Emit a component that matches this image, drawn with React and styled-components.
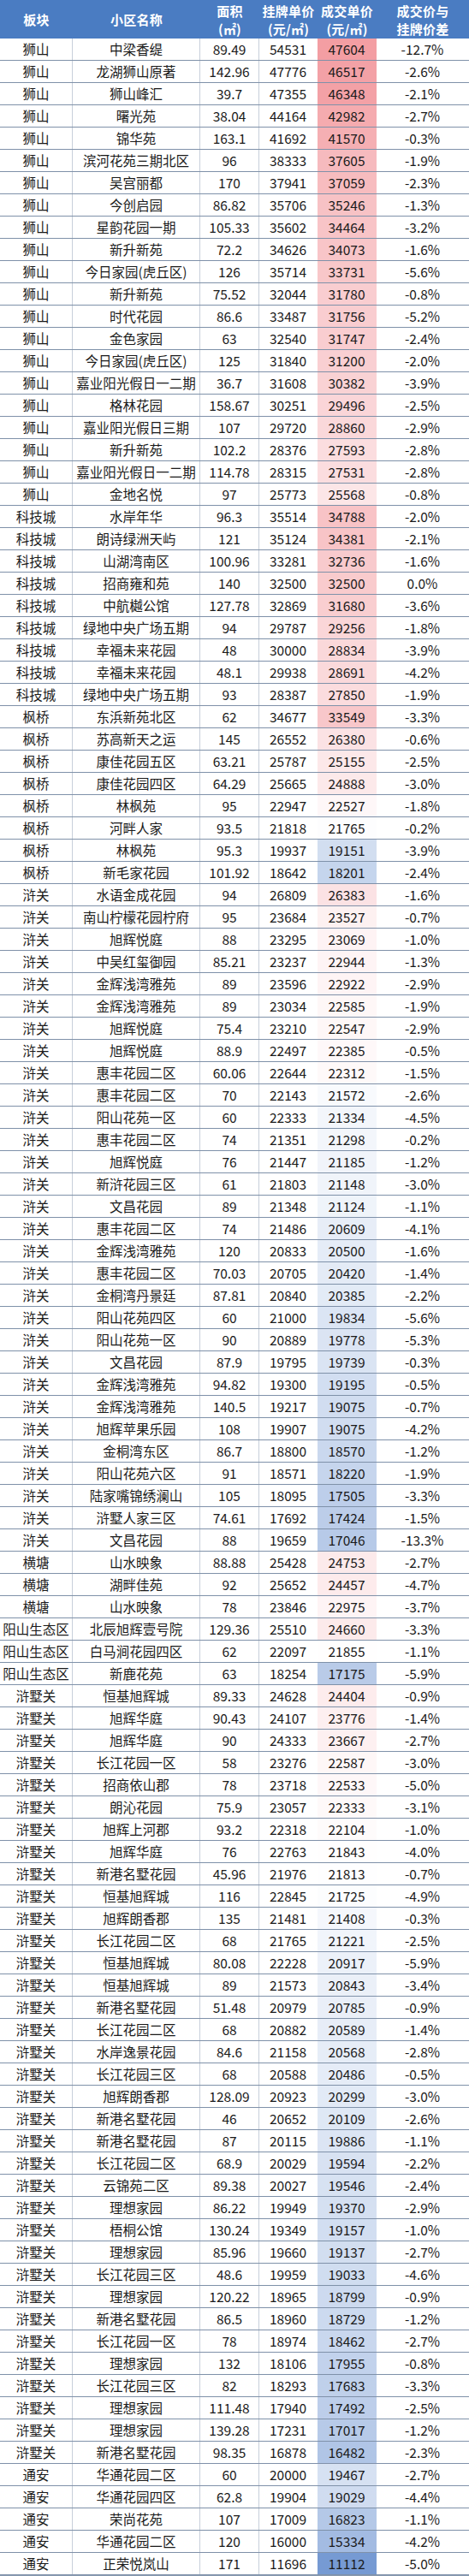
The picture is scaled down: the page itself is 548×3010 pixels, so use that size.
import React from "react";
import styled, { createGlobalStyle } from "styled-components";

const GlobalStyle = createGlobalStyle`
  html, body {
    margin: 0;
    padding: 0;
    background: #ffffff;
  }
  body {
    font-family: "Noto Sans CJK SC", "Noto Sans", sans-serif;
    color: #1a1a1a;
  }
`;

// 板块|小区|面积|挂牌单价|成交单价|差
const RAW = `狮山|中梁香缇|89.49|54531|47604|-12.7%
狮山|龙湖狮山原著|142.96|47776|46517|-2.6%
狮山|狮山峰汇|39.7|47355|46348|-2.1%
狮山|曙光苑|38.04|44164|42982|-2.7%
狮山|锦华苑|163.1|41692|41570|-0.3%
狮山|滨河花苑三期北区|96|38333|37605|-1.9%
狮山|吴宫丽都|170|37941|37059|-2.3%
狮山|今创启园|86.82|35706|35246|-1.3%
狮山|星韵花园一期|105.33|35602|34464|-3.2%
狮山|新升新苑|72.2|34626|34073|-1.6%
狮山|今日家园(虎丘区)|126|35714|33731|-5.6%
狮山|新升新苑|75.52|32044|31780|-0.8%
狮山|时代花园|86.6|33487|31756|-5.2%
狮山|金色家园|63|32540|31747|-2.4%
狮山|今日家园(虎丘区)|125|31840|31200|-2.0%
狮山|嘉业阳光假日一二期|36.7|31608|30382|-3.9%
狮山|格林花园|158.67|30251|29496|-2.5%
狮山|嘉业阳光假日三期|107|29720|28860|-2.9%
狮山|新升新苑|102.2|28376|27593|-2.8%
狮山|嘉业阳光假日一二期|114.78|28315|27531|-2.8%
狮山|金地名悦|97|25773|25568|-0.8%
科技城|水岸年华|96.3|35514|34788|-2.0%
科技城|朗诗绿洲天屿|121|35124|34381|-2.1%
科技城|山湖湾南区|100.96|33281|32736|-1.6%
科技城|招商雍和苑|140|32500|32500|0.0%
科技城|中航樾公馆|127.78|32869|31680|-3.6%
科技城|绿地中央广场五期|94|29787|29256|-1.8%
科技城|幸福未来花园|48|30000|28834|-3.9%
科技城|幸福未来花园|48.1|29938|28691|-4.2%
科技城|绿地中央广场五期|93|28387|27850|-1.9%
枫桥|东浜新苑北区|62|34677|33549|-3.3%
枫桥|苏高新天之运|145|26552|26380|-0.6%
枫桥|康佳花园五区|63.21|25787|25155|-2.5%
枫桥|康佳花园四区|64.29|25665|24888|-3.0%
枫桥|林枫苑|95|22947|22527|-1.8%
枫桥|河畔人家|93.5|21818|21765|-0.2%
枫桥|林枫苑|95.3|19937|19151|-3.9%
枫桥|新毛家花园|101.92|18642|18201|-2.4%
浒关|水语金成花园|94|26809|26383|-1.6%
浒关|南山柠檬花园柠府|95|23684|23527|-0.7%
浒关|旭辉悦庭|88|23295|23069|-1.0%
浒关|中吴红玺御园|85.21|23237|22944|-1.3%
浒关|金辉浅湾雅苑|89|23596|22922|-2.9%
浒关|金辉浅湾雅苑|89|23034|22585|-1.9%
浒关|旭辉悦庭|75.4|23210|22547|-2.9%
浒关|旭辉悦庭|88.9|22497|22385|-0.5%
浒关|惠丰花园二区|60.06|22644|22312|-1.5%
浒关|惠丰花园二区|70|22143|21572|-2.6%
浒关|阳山花苑一区|60|22333|21334|-4.5%
浒关|惠丰花园二区|74|21351|21298|-0.2%
浒关|旭辉悦庭|76|21447|21185|-1.2%
浒关|新浒花园三区|61|21803|21148|-3.0%
浒关|文昌花园|89|21348|21124|-1.1%
浒关|惠丰花园二区|74|21486|20609|-4.1%
浒关|金辉浅湾雅苑|120|20833|20500|-1.6%
浒关|惠丰花园二区|70.03|20705|20420|-1.4%
浒关|金桐湾丹景廷|87.81|20840|20385|-2.2%
浒关|阳山花苑四区|60|21000|19834|-5.6%
浒关|阳山花苑一区|90|20889|19778|-5.3%
浒关|文昌花园|87.9|19795|19739|-0.3%
浒关|金辉浅湾雅苑|94.82|19300|19195|-0.5%
浒关|金辉浅湾雅苑|140.5|19217|19075|-0.7%
浒关|旭辉苹果乐园|108|19907|19075|-4.2%
浒关|金桐湾东区|86.7|18800|18570|-1.2%
浒关|阳山花苑六区|91|18571|18220|-1.9%
浒关|陆家嘴锦绣澜山|105|18095|17505|-3.3%
浒关|浒墅人家三区|74.61|17692|17424|-1.5%
浒关|文昌花园|88|19659|17046|-13.3%
横塘|山水映象|88.88|25428|24753|-2.7%
横塘|湖畔佳苑|92|25652|24457|-4.7%
横塘|山水映象|78|23846|22975|-3.7%
阳山生态区|北辰旭辉壹号院|129.36|25510|24660|-3.3%
阳山生态区|白马涧花园四区|62|22097|21855|-1.1%
阳山生态区|新鹿花苑|63|18254|17175|-5.9%
浒墅关|恒基旭辉城|89.33|24628|24404|-0.9%
浒墅关|旭辉华庭|90.43|24107|23776|-1.4%
浒墅关|旭辉华庭|90|24333|23667|-2.7%
浒墅关|长江花园一区|58|23276|22587|-3.0%
浒墅关|招商依山郡|78|23718|22533|-5.0%
浒墅关|朗沁花园|75.9|23057|22333|-3.1%
浒墅关|旭辉上河郡|93.2|22318|22104|-1.0%
浒墅关|旭辉华庭|76|22763|21843|-4.0%
浒墅关|新港名墅花园|45.96|21976|21813|-0.7%
浒墅关|恒基旭辉城|116|22845|21725|-4.9%
浒墅关|旭辉朗香郡|135|21481|21408|-0.3%
浒墅关|长江花园二区|68|21765|21221|-2.5%
浒墅关|恒基旭辉城|80.08|22228|20917|-5.9%
浒墅关|恒基旭辉城|89|21573|20843|-3.4%
浒墅关|新港名墅花园|51.48|20979|20785|-0.9%
浒墅关|长江花园二区|68|20882|20589|-1.4%
浒墅关|水岸逸景花园|84.6|21158|20568|-2.8%
浒墅关|长江花园三区|68|20588|20486|-0.5%
浒墅关|旭辉朗香郡|128.09|20923|20299|-3.0%
浒墅关|新港名墅花园|46|20652|20109|-2.6%
浒墅关|新港名墅花园|87|20115|19886|-1.1%
浒墅关|长江花园二区|68.9|20029|19594|-2.2%
浒墅关|云锦苑二区|89.38|20027|19546|-2.4%
浒墅关|理想家园|86.22|19949|19370|-2.9%
浒墅关|梧桐公馆|130.24|19349|19157|-1.0%
浒墅关|理想家园|85.96|19660|19137|-2.7%
浒墅关|长江花园三区|48.6|19959|19033|-4.6%
浒墅关|理想家园|120.22|18965|18799|-0.9%
浒墅关|新港名墅花园|86.5|18960|18729|-1.2%
浒墅关|长江花园一区|78|18974|18462|-2.7%
浒墅关|理想家园|132|18106|17955|-0.8%
浒墅关|长江花园三区|82|18293|17683|-3.3%
浒墅关|理想家园|111.48|17940|17492|-2.5%
浒墅关|理想家园|139.28|17231|17017|-1.2%
浒墅关|新港名墅花园|98.35|16878|16482|-2.3%
通安|华通花园二区|60|20000|19467|-2.7%
通安|华通花园四区|62.8|19904|19029|-4.4%
通安|荣尚花苑|107|17009|16823|-1.1%
通安|华通花园二区|120|16000|15334|-4.2%
通安|正荣悦岚山|171|11696|11112|-5.0%`;

const rows = RAW.split("\n").map((line) => line.split("|"));

// three colour scale like excel: red top, white at median, blue bottom
const deals = rows.map((r) => Number(r[4]));
const sorted = [...deals].sort((a, b) => a - b);
const lo = sorted[0];
const hi = sorted[sorted.length - 1];
const n = sorted.length;
const mid = n % 2 ? sorted[(n - 1) / 2] : (sorted[n / 2 - 1] + sorted[n / 2]) / 2;

const RED = [243, 158, 163];
const BLUE = [118, 154, 211];

const mix = (c, t) =>
  `rgb(${c.map((v) => Math.round(255 + (v - 255) * t)).join(",")})`;

const scaleColor = (v) => {
  if (v >= mid) return mix(RED, Math.pow((v - mid) / (hi - mid), 0.7));
  return mix(BLUE, Math.pow((mid - v) / (mid - lo), 0.8));
};

const COLS = "85px 149px 69px 68px 69px 108px";

const Table = styled.div`
  width: 548px;
  display: flex;
  flex-direction: column;
  border-bottom: 1px solid #8a9bb1;
`;

const HeadRow = styled.div`
  display: grid;
  grid-template-columns: ${COLS};
  height: 45px;
  background: #4a7cc2;
  color: #ffffff;
`;

const HeadCell = styled.div`
  display: flex;
  align-items: center;
  justify-content: center;
  text-align: center;
  font-size: 15px;
  font-weight: 700;
  line-height: 21px;
  white-space: pre-line;
  letter-spacing: 0.2px;
`;

const Row = styled.div`
  display: grid;
  grid-template-columns: ${COLS};
  height: 26px;
  box-sizing: border-box;
  border-bottom: 1px solid #7f91a9;
`;

const Cell = styled.div`
  display: flex;
  align-items: center;
  justify-content: center;
  font-size: 15.5px;
  line-height: 1;
  white-space: nowrap;
  border-right: 1px solid ${(p) => (p.$line ? "#c7cfda" : "transparent")};
  background: ${(p) => p.$bg || "transparent"};
  padding-top: 1px;
`;

const HEAD = ["板块", "小区名称", "面积\n(㎡)", "挂牌单价\n(元/㎡)", "成交单价\n(元/㎡)", "成交价与\n挂牌价差"];

export default function App() {
  return (
    <>
      <GlobalStyle />
      <Table>
        <HeadRow>
          {HEAD.map((h) => (
            <HeadCell key={h}>{h}</HeadCell>
          ))}
        </HeadRow>
        {rows.map((r, i) => (
          <Row key={i}>
            <Cell $line>{r[0]}</Cell>
            <Cell $line>{r[1]}</Cell>
            <Cell $line>{r[2]}</Cell>
            <Cell>{r[3]}</Cell>
            <Cell $bg={scaleColor(Number(r[4]))}>{r[4]}</Cell>
            <Cell>{r[5]}</Cell>
          </Row>
        ))}
      </Table>
    </>
  );
}
